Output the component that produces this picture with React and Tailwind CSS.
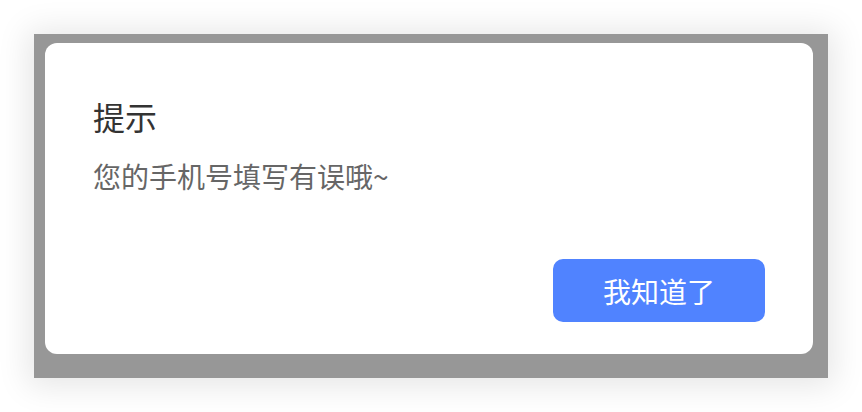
export default function App() {
  return (
    <div className="w-[862px] h-[412px] bg-white p-[34px]" style={{ fontFamily: '"Noto Sans CJK SC", "Noto Sans", sans-serif' }}>
      <div className="w-[794px] h-[344px] bg-[#979797] pl-[11px] pt-[9px] shadow-[0_2px_30px_6px_rgba(0,0,0,0.10)]">
        <div className="w-[768px] h-[311px] bg-white rounded-[12px] px-[48px] pt-[53px] pb-[32px] flex flex-col">
          <h1 className="text-[32px] leading-[40px] text-[#333333]">提示</h1>
          <p className="mt-[22px] text-[28px] leading-[36px] text-[#666666]">您的手机号填写有误哦~</p>
          <div className="mt-auto flex justify-end">
            <button className="w-[212px] h-[63px] rounded-[10px] bg-[#5083ff] text-white text-[28px] leading-none">
              我知道了
            </button>
          </div>
        </div>
      </div>
    </div>
  )
}
